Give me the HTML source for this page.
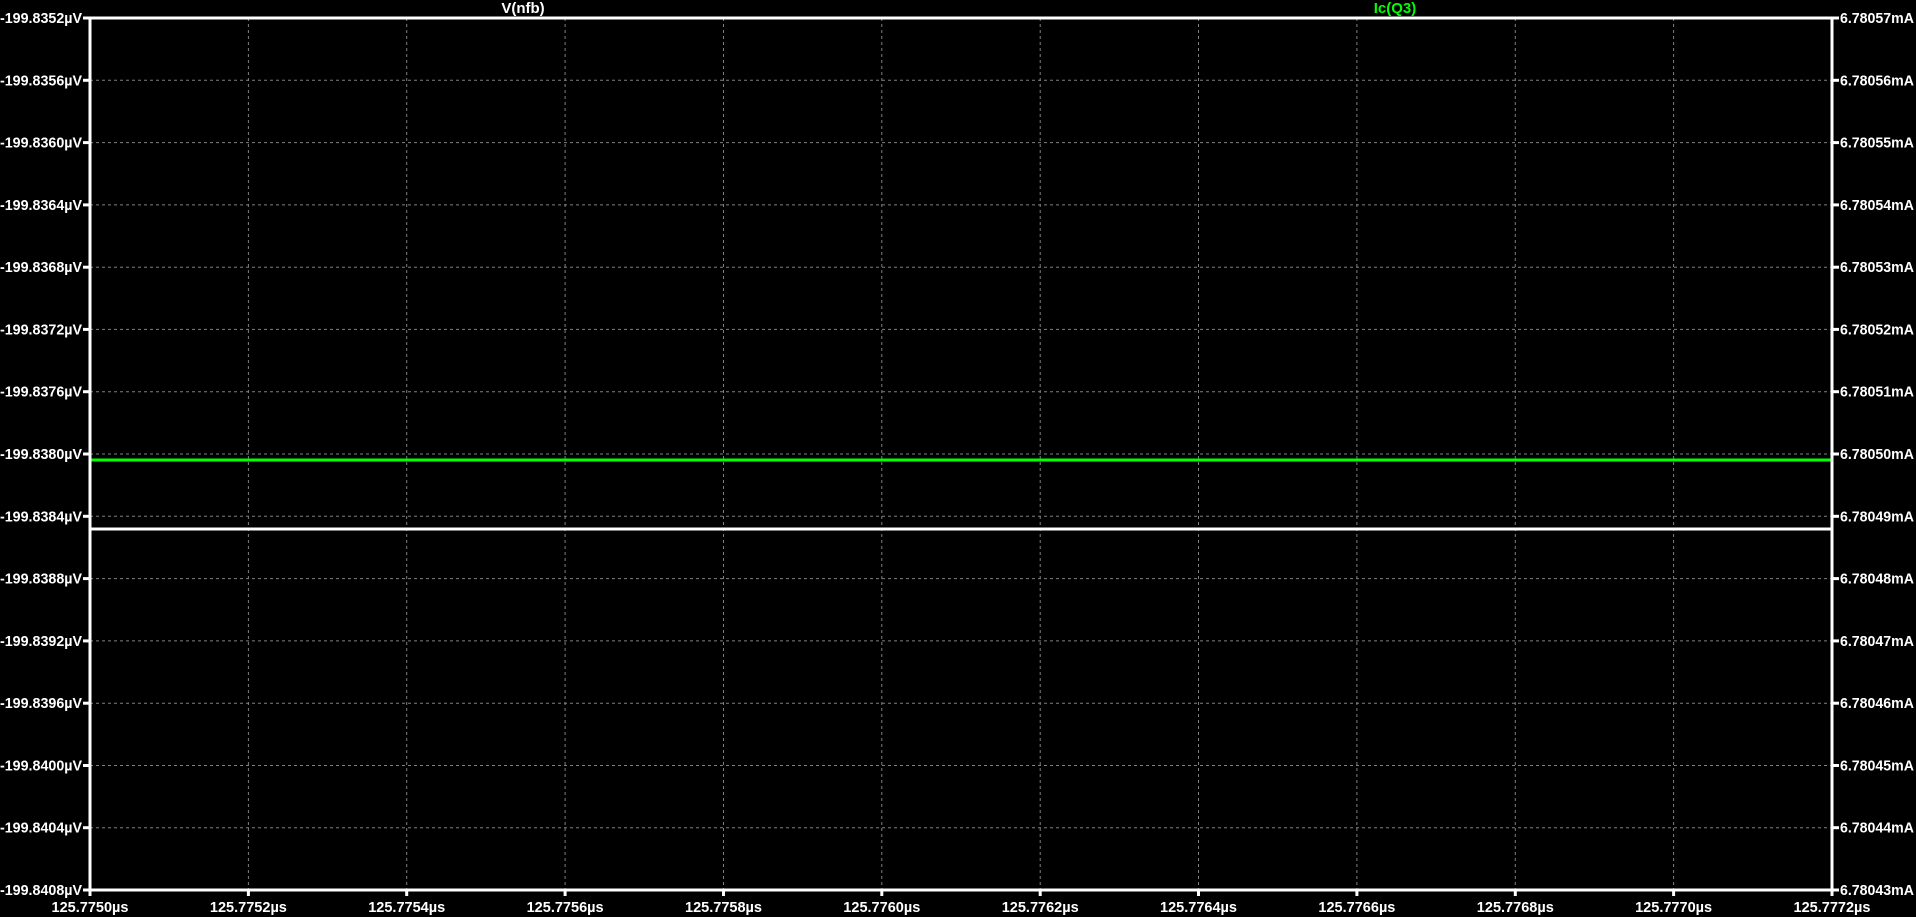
<!DOCTYPE html>
<html><head><meta charset="utf-8"><style>
html,body{margin:0;padding:0;background:#000;width:1916px;height:917px;overflow:hidden}
svg{display:block}
text{font-family:"Liberation Sans",sans-serif;font-weight:bold;font-size:15px;fill:#fff}
</style></head><body>
<svg width="1916" height="917" xmlns="http://www.w3.org/2000/svg">
<rect width="1916" height="917" fill="#000"/>
<g stroke="#808080" stroke-width="1" stroke-dasharray="3,3">
<line x1="90" y1="80.3" x2="1832" y2="80.3"/><line x1="90" y1="142.6" x2="1832" y2="142.6"/><line x1="90" y1="204.9" x2="1832" y2="204.9"/><line x1="90" y1="267.2" x2="1832" y2="267.2"/><line x1="90" y1="329.4" x2="1832" y2="329.4"/><line x1="90" y1="391.7" x2="1832" y2="391.7"/><line x1="90" y1="454" x2="1832" y2="454"/><line x1="90" y1="516.3" x2="1832" y2="516.3"/><line x1="90" y1="578.6" x2="1832" y2="578.6"/><line x1="90" y1="640.9" x2="1832" y2="640.9"/><line x1="90" y1="703.2" x2="1832" y2="703.2"/><line x1="90" y1="765.5" x2="1832" y2="765.5"/><line x1="90" y1="827.7" x2="1832" y2="827.7"/>
<line x1="248.4" y1="18" x2="248.4" y2="890"/><line x1="406.7" y1="18" x2="406.7" y2="890"/><line x1="565.1" y1="18" x2="565.1" y2="890"/><line x1="723.5" y1="18" x2="723.5" y2="890"/><line x1="881.8" y1="18" x2="881.8" y2="890"/><line x1="1040.2" y1="18" x2="1040.2" y2="890"/><line x1="1198.5" y1="18" x2="1198.5" y2="890"/><line x1="1356.9" y1="18" x2="1356.9" y2="890"/><line x1="1515.3" y1="18" x2="1515.3" y2="890"/><line x1="1673.6" y1="18" x2="1673.6" y2="890"/>
</g>
<line x1="90" y1="460" x2="1832" y2="460" stroke="#00ff00" stroke-width="3"/>
<line x1="90" y1="529" x2="1832" y2="529" stroke="#fff" stroke-width="3"/>
<rect x="90" y="18" width="1742" height="872" fill="none" stroke="#fff" stroke-width="3"/>
<g stroke="#fff" stroke-width="3">
<line x1="83" y1="18" x2="90" y2="18"/><line x1="83" y1="80.3" x2="90" y2="80.3"/><line x1="83" y1="142.6" x2="90" y2="142.6"/><line x1="83" y1="204.9" x2="90" y2="204.9"/><line x1="83" y1="267.2" x2="90" y2="267.2"/><line x1="83" y1="329.4" x2="90" y2="329.4"/><line x1="83" y1="391.7" x2="90" y2="391.7"/><line x1="83" y1="454" x2="90" y2="454"/><line x1="83" y1="516.3" x2="90" y2="516.3"/><line x1="83" y1="578.6" x2="90" y2="578.6"/><line x1="83" y1="640.9" x2="90" y2="640.9"/><line x1="83" y1="703.2" x2="90" y2="703.2"/><line x1="83" y1="765.5" x2="90" y2="765.5"/><line x1="83" y1="827.7" x2="90" y2="827.7"/><line x1="83" y1="890" x2="90" y2="890"/>
<line x1="1832" y1="18" x2="1839" y2="18"/><line x1="1832" y1="80.3" x2="1839" y2="80.3"/><line x1="1832" y1="142.6" x2="1839" y2="142.6"/><line x1="1832" y1="204.9" x2="1839" y2="204.9"/><line x1="1832" y1="267.2" x2="1839" y2="267.2"/><line x1="1832" y1="329.4" x2="1839" y2="329.4"/><line x1="1832" y1="391.7" x2="1839" y2="391.7"/><line x1="1832" y1="454" x2="1839" y2="454"/><line x1="1832" y1="516.3" x2="1839" y2="516.3"/><line x1="1832" y1="578.6" x2="1839" y2="578.6"/><line x1="1832" y1="640.9" x2="1839" y2="640.9"/><line x1="1832" y1="703.2" x2="1839" y2="703.2"/><line x1="1832" y1="765.5" x2="1839" y2="765.5"/><line x1="1832" y1="827.7" x2="1839" y2="827.7"/><line x1="1832" y1="890" x2="1839" y2="890"/>
<line x1="90" y1="890" x2="90" y2="896"/><line x1="248.4" y1="890" x2="248.4" y2="896"/><line x1="406.7" y1="890" x2="406.7" y2="896"/><line x1="565.1" y1="890" x2="565.1" y2="896"/><line x1="723.5" y1="890" x2="723.5" y2="896"/><line x1="881.8" y1="890" x2="881.8" y2="896"/><line x1="1040.2" y1="890" x2="1040.2" y2="896"/><line x1="1198.5" y1="890" x2="1198.5" y2="896"/><line x1="1356.9" y1="890" x2="1356.9" y2="896"/><line x1="1515.3" y1="890" x2="1515.3" y2="896"/><line x1="1673.6" y1="890" x2="1673.6" y2="896"/><line x1="1832" y1="890" x2="1832" y2="896"/>
</g>
<g text-anchor="end">
<text x="82" y="23" textLength="82" lengthAdjust="spacingAndGlyphs">-199.8352µV</text>
<text x="82" y="85.3" textLength="82" lengthAdjust="spacingAndGlyphs">-199.8356µV</text>
<text x="82" y="147.6" textLength="82" lengthAdjust="spacingAndGlyphs">-199.8360µV</text>
<text x="82" y="209.9" textLength="82" lengthAdjust="spacingAndGlyphs">-199.8364µV</text>
<text x="82" y="272.2" textLength="82" lengthAdjust="spacingAndGlyphs">-199.8368µV</text>
<text x="82" y="334.4" textLength="82" lengthAdjust="spacingAndGlyphs">-199.8372µV</text>
<text x="82" y="396.7" textLength="82" lengthAdjust="spacingAndGlyphs">-199.8376µV</text>
<text x="82" y="459" textLength="82" lengthAdjust="spacingAndGlyphs">-199.8380µV</text>
<text x="82" y="521.3" textLength="82" lengthAdjust="spacingAndGlyphs">-199.8384µV</text>
<text x="82" y="583.6" textLength="82" lengthAdjust="spacingAndGlyphs">-199.8388µV</text>
<text x="82" y="645.9" textLength="82" lengthAdjust="spacingAndGlyphs">-199.8392µV</text>
<text x="82" y="708.2" textLength="82" lengthAdjust="spacingAndGlyphs">-199.8396µV</text>
<text x="82" y="770.5" textLength="82" lengthAdjust="spacingAndGlyphs">-199.8400µV</text>
<text x="82" y="832.7" textLength="82" lengthAdjust="spacingAndGlyphs">-199.8404µV</text>
<text x="82" y="895" textLength="82" lengthAdjust="spacingAndGlyphs">-199.8408µV</text>
</g>
<g>
<text x="1840" y="23" textLength="74" lengthAdjust="spacingAndGlyphs">6.78057mA</text>
<text x="1840" y="85.3" textLength="74" lengthAdjust="spacingAndGlyphs">6.78056mA</text>
<text x="1840" y="147.6" textLength="74" lengthAdjust="spacingAndGlyphs">6.78055mA</text>
<text x="1840" y="209.9" textLength="74" lengthAdjust="spacingAndGlyphs">6.78054mA</text>
<text x="1840" y="272.2" textLength="74" lengthAdjust="spacingAndGlyphs">6.78053mA</text>
<text x="1840" y="334.4" textLength="74" lengthAdjust="spacingAndGlyphs">6.78052mA</text>
<text x="1840" y="396.7" textLength="74" lengthAdjust="spacingAndGlyphs">6.78051mA</text>
<text x="1840" y="459" textLength="74" lengthAdjust="spacingAndGlyphs">6.78050mA</text>
<text x="1840" y="521.3" textLength="74" lengthAdjust="spacingAndGlyphs">6.78049mA</text>
<text x="1840" y="583.6" textLength="74" lengthAdjust="spacingAndGlyphs">6.78048mA</text>
<text x="1840" y="645.9" textLength="74" lengthAdjust="spacingAndGlyphs">6.78047mA</text>
<text x="1840" y="708.2" textLength="74" lengthAdjust="spacingAndGlyphs">6.78046mA</text>
<text x="1840" y="770.5" textLength="74" lengthAdjust="spacingAndGlyphs">6.78045mA</text>
<text x="1840" y="832.7" textLength="74" lengthAdjust="spacingAndGlyphs">6.78044mA</text>
<text x="1840" y="895" textLength="74" lengthAdjust="spacingAndGlyphs">6.78043mA</text>
</g>
<g text-anchor="middle">
<text x="90" y="912" textLength="77" lengthAdjust="spacingAndGlyphs">125.7750µs</text>
<text x="248.4" y="912" textLength="77" lengthAdjust="spacingAndGlyphs">125.7752µs</text>
<text x="406.7" y="912" textLength="77" lengthAdjust="spacingAndGlyphs">125.7754µs</text>
<text x="565.1" y="912" textLength="77" lengthAdjust="spacingAndGlyphs">125.7756µs</text>
<text x="723.5" y="912" textLength="77" lengthAdjust="spacingAndGlyphs">125.7758µs</text>
<text x="881.8" y="912" textLength="77" lengthAdjust="spacingAndGlyphs">125.7760µs</text>
<text x="1040.2" y="912" textLength="77" lengthAdjust="spacingAndGlyphs">125.7762µs</text>
<text x="1198.5" y="912" textLength="77" lengthAdjust="spacingAndGlyphs">125.7764µs</text>
<text x="1356.9" y="912" textLength="77" lengthAdjust="spacingAndGlyphs">125.7766µs</text>
<text x="1515.3" y="912" textLength="77" lengthAdjust="spacingAndGlyphs">125.7768µs</text>
<text x="1673.6" y="912" textLength="77" lengthAdjust="spacingAndGlyphs">125.7770µs</text>
<text x="1832" y="912" textLength="77" lengthAdjust="spacingAndGlyphs">125.7772µs</text>
<text x="523" y="13">V(nfb)</text>
<text x="1395" y="13" style="fill:#00ff00">Ic(Q3)</text>
</g>
</svg>
</body></html>
